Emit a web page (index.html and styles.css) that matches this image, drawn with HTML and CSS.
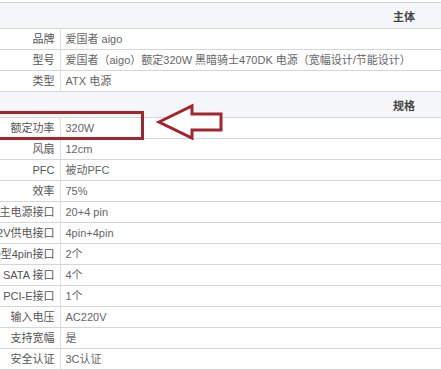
FILE: index.html
```html
<!DOCTYPE html>
<html lang="zh-CN">
<head>
<meta charset="utf-8">
<title>爱国者 aigo 黑暗骑士470DK 参数</title>
<link rel="stylesheet" href="styles.css">
</head>
<body>
<div class="sheet">
  <table class="spec">
    <colgroup><col class="c-label"><col class="c-value"></colgroup>
    <tbody>
      <tr class="group"><th colspan="2">主体</th></tr>
      <tr><td class="k">品牌</td><td class="v">爱国者 aigo</td></tr>
      <tr><td class="k">型号</td><td class="v">爱国者（aigo）额定320W 黑暗骑士470DK 电源（宽幅设计/节能设计）</td></tr>
      <tr><td class="k">类型</td><td class="v">ATX 电源</td></tr>
      <tr class="group"><th colspan="2">规格</th></tr>
      <tr><td class="k">额定功率</td><td class="v">320W</td></tr>
      <tr><td class="k">风扇</td><td class="v">12cm</td></tr>
      <tr><td class="k">PFC</td><td class="v">被动PFC</td></tr>
      <tr><td class="k">效率</td><td class="v">75%</td></tr>
      <tr><td class="k">主电源接口</td><td class="v">20+4 pin</td></tr>
      <tr><td class="k">12V供电接口</td><td class="v">4pin+4pin</td></tr>
      <tr><td class="k">D型4pin接口</td><td class="v">2个</td></tr>
      <tr><td class="k">SATA 接口</td><td class="v">4个</td></tr>
      <tr><td class="k">6pin PCI-E接口</td><td class="v">1个</td></tr>
      <tr><td class="k">输入电压</td><td class="v">AC220V</td></tr>
      <tr><td class="k">支持宽幅</td><td class="v">是</td></tr>
      <tr><td class="k">安全认证</td><td class="v">3C认证</td></tr>
      <tr><td class="k">其他</td><td class="v">过压保护/过流保护/短路保护</td></tr>
    </tbody>
  </table>

  <!-- highlight around the rated power row -->
  <div class="mark-box"></div>
  <svg class="mark-arrow" width="68" height="40" viewBox="0 0 68 40" aria-hidden="true">
    <polygon points="3,19 36,3 36,11 65,11 65,27 36,27 36,35" fill="#fff" stroke="#a3262c" stroke-width="3" stroke-linejoin="miter"/>
  </svg>
</div>
</body>
</html>
```
FILE: styles.css
```css
html, body {
  margin: 0;
  padding: 0;
  background: #fff;
  overflow: hidden;
}

.sheet {
  position: relative;
  width: 441px;
  height: 370px;
  overflow: hidden;
  padding-top: 2px;
  box-sizing: border-box;
}

.spec {
  margin-left: -30px;
  width: 480px;
  border-collapse: collapse;
  font-family: "Liberation Sans", "Noto Sans CJK SC", sans-serif;
  font-size: 11px;
  color: #5a5a5a;
  table-layout: fixed;
}

.c-label { width: 90px; }

.spec td,
.spec th {
  border-top: 1px solid #d6d6d6;
  border-bottom: 1px solid #d6d6d6;
  padding: 0;
  white-space: nowrap;
  overflow: hidden;
}

.spec td {
  height: 20px;
  line-height: 20px;
}

.spec .k {
  text-align: right;
  padding-right: 5px;
  border-right: 1px solid #dcdcdc;
  color: #555;
}

.spec .v {
  padding-left: 5px;
  color: #666;
}

.group th {
  height: 25px;
  text-align: right;
  padding-right: 35px;
  font-weight: bold;
  color: #444;
  background: #f4f6f9;
  border-top-color: #cfcfcf;
}

.mark-box {
  position: absolute;
  left: -10px;
  top: 111px;
  width: 154px;
  height: 29px;
  box-sizing: border-box;
  border: 3px solid #a3262c;
}

.mark-arrow {
  position: absolute;
  left: 156px;
  top: 103px;
}
```
